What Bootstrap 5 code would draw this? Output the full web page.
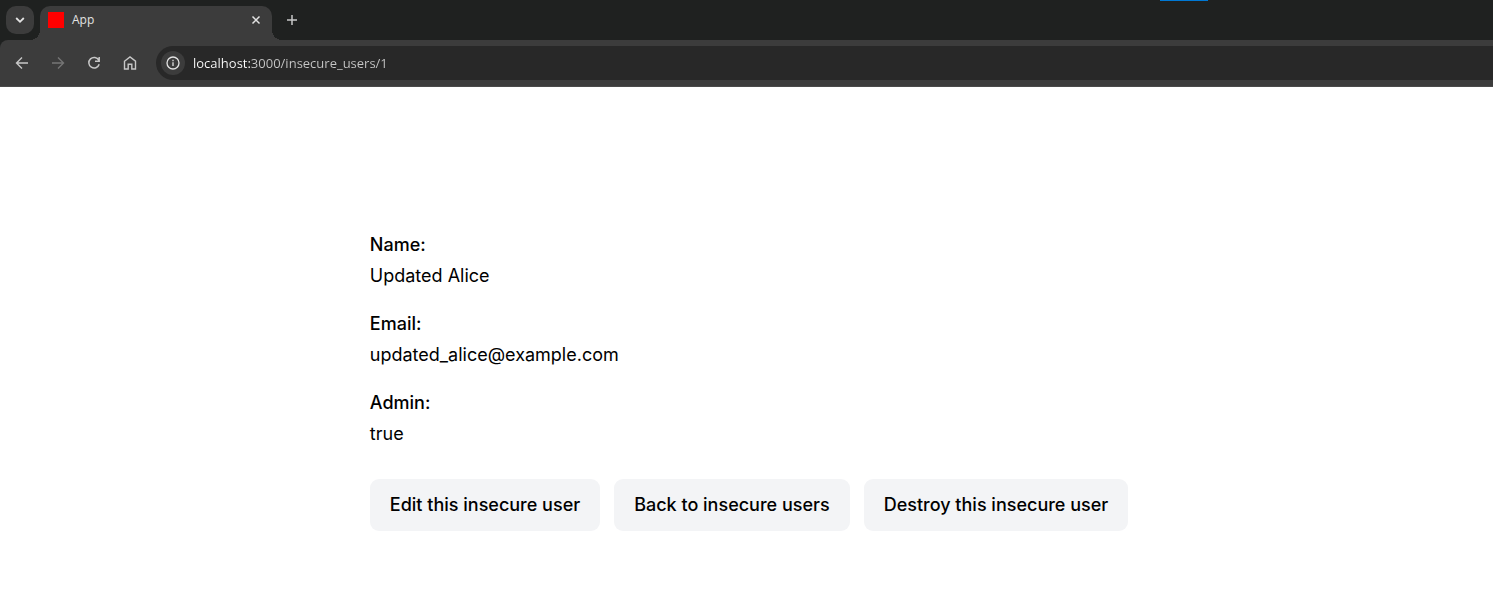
<!DOCTYPE html>
<html lang="en">
<head>
<meta charset="utf-8">
<meta name="viewport" content="width=device-width, initial-scale=1">
<title>App</title>
<link href="https://cdn.jsdelivr.net/npm/bootstrap@5.3.0/dist/css/bootstrap.min.css" rel="stylesheet">
<style>
  body { font-family: Inter, "Liberation Sans", sans-serif; font-size: 18px; line-height: 26px; color: #000; background: #fff; }
  .browser { font-family: "Open Sans", "Noto Sans", sans-serif; font-size: 12px; line-height: 18px; color: #e3e3e3; }
  .browser button { border: 0; padding: 0; background: transparent; color: #c7c7c7; display: flex; align-items: center; justify-content: center; flex: none; }
  .browser svg { display: block; fill: none; stroke: currentColor; }
  .strip { height: 40px; background: #1f2120; padding: 6px 0 0 6px; }
  .accent { top: 0; left: 77.7%; width: 48px; height: 1px; background: #0078d4; }
  .browser .search-tabs { width: 28px; height: 28px; border-radius: 10px; background: #3c3c3c; color: #e3e3e3; }
  .tab { width: 232px; height: 34px; margin-left: 6px; padding: 0 8px 6px; background: #3c3c3c; border-radius: 10px 10px 0 0; }
  .tab::before, .tab::after { content: ""; position: absolute; bottom: 0; width: 10px; height: 10px; }
  .tab::before { right: 100%; background: radial-gradient(circle at 0 0, transparent 10px, #3c3c3c 10px); }
  .tab::after { left: 100%; background: radial-gradient(circle at 100% 0, transparent 10px, #3c3c3c 10px); }
  .favicon { width: 16px; height: 16px; background: #f00; }
  .browser .tab button { width: 16px; height: 16px; color: #e3e3e3; }
  .browser .new-tab { width: 28px; height: 28px; margin-left: 6px; }
  .toolbar-wrap { background: #1f2120; }
  .toolbar { height: 47px; padding: 6px 0 6px 4px; background: #3c3c3c; border-bottom: 1px solid #4a4a4a; border-radius: 8px 0 0 0; }
  .browser .nav-btn { width: 36px; height: 34px; }
  .browser .nav-btn:disabled { color: #757575; }
  .address { height: 34px; margin-left: 8px; padding-left: 5px; background: #282828; border-radius: 17px 0 0 17px; }
  .browser .site-info { width: 24px; height: 24px; border-radius: 50%; background: #3c3c3c; color: #e3e3e3; }
  .url { border: 0; outline: 0; padding: 0; margin-left: 8px; font-size: 13px; line-height: 20px; color: transparent; background: linear-gradient(90deg, #fff 58px, #c7c7c7 58px); -webkit-background-clip: text; background-clip: text; }
  .page { max-width: 1130px; padding-top: 145px; }
  .page dt { font-weight: 500; margin-bottom: 5px; }
  .page dd { margin-bottom: 22px; }
  .actions { gap: 14px; padding-top: 10px; }
  .btn-soft { --bs-btn-bg: #f3f4f6; --bs-btn-color: #000; --bs-btn-border-color: transparent; --bs-btn-hover-bg: #f9fafb; --bs-btn-hover-color: #000; border: 0; font-size: 18px; line-height: 26px; font-weight: 500; padding: 13px 20px; border-radius: 9px; }
</style>
</head>
<body>
<header class="browser position-relative">
  <div class="strip d-flex">
    <button class="search-tabs" type="button" aria-label="Search tabs"><svg width="16" height="16" viewBox="0 0 16 16" stroke-width="1.8"><path d="M4.200 6 8 9.800 11.800 6"/></svg></button>
    <div class="tab position-relative d-flex align-items-center">
      <span class="favicon"></span>
      <span class="ms-2 flex-grow-1">App</span>
      <button type="button" aria-label="Close tab"><svg width="16" height="16" viewBox="0 0 16 16" stroke-width="1.5"><path d="m4.500 4.500 7 7m0-7-7 7"/></svg></button>
    </div>
    <button class="new-tab" type="button" aria-label="New tab"><svg width="16" height="16" viewBox="0 0 16 16" stroke-width="1.5"><path d="M8 3v10M3 8h10"/></svg></button>
  </div>
  <div class="accent position-absolute"></div>
  <div class="toolbar-wrap">
    <div class="toolbar d-flex">
      <button class="nav-btn" type="button" aria-label="Back"><svg width="16" height="16" viewBox="0 0 16 16" stroke-width="1.4"><path d="M14 8H3M8 2.500 2.500 8 8 13.500"/></svg></button>
      <button class="nav-btn" type="button" aria-label="Forward" disabled><svg width="16" height="16" viewBox="0 0 16 16" stroke-width="1.4"><path d="M2 8h11M8 2.500 13.500 8 8 13.500"/></svg></button>
      <button class="nav-btn" type="button" aria-label="Reload"><svg width="16" height="16" viewBox="0 0 16 16" stroke-width="1.500"><path d="M12.800 5.200A5.300 5.300 0 1 0 13.200 9.300M13.200 2v4.200H9"/></svg></button>
      <button class="nav-btn" type="button" aria-label="Home"><svg width="16" height="16" viewBox="0 0 16 16" stroke-width="1.4"><path d="M2.500 6.200 8 2l5.500 4.200v7.800H9.800V9.200H6.200V14H2.500z"/></svg></button>
      <div class="address d-flex align-items-center flex-grow-1">
        <button class="site-info" type="button" aria-label="View site information"><svg width="16" height="16" viewBox="0 0 16 16" stroke-width="1.3"><circle cx="8" cy="8" r="6"/><path d="M8 7.200v3.800M8 4.700v1.500"/></svg></button>
        <input class="url flex-grow-1" type="text" aria-label="Address" value="localhost:3000/insecure_users/1">
      </div>
    </div>
  </div>
</header>
<main class="page container-fluid px-0">
  <div class="row g-0">
    <div class="col-10 offset-2">
      <dl class="mb-0">
        <dt>Name:</dt>
        <dd>Updated Alice</dd>
        <dt>Email:</dt>
        <dd>updated_alice@example.com</dd>
        <dt>Admin:</dt>
        <dd>true</dd>
      </dl>
      <div class="actions d-flex flex-wrap">
        <a class="btn btn-soft" href="#edit">Edit this insecure user</a>
        <a class="btn btn-soft" href="#users">Back to insecure users</a>
        <button class="btn btn-soft" type="button">Destroy this insecure user</button>
      </div>
    </div>
  </div>
</main>
<script src="https://cdn.jsdelivr.net/npm/bootstrap@5.3.0/dist/js/bootstrap.bundle.min.js"></script>
</body>
</html>
